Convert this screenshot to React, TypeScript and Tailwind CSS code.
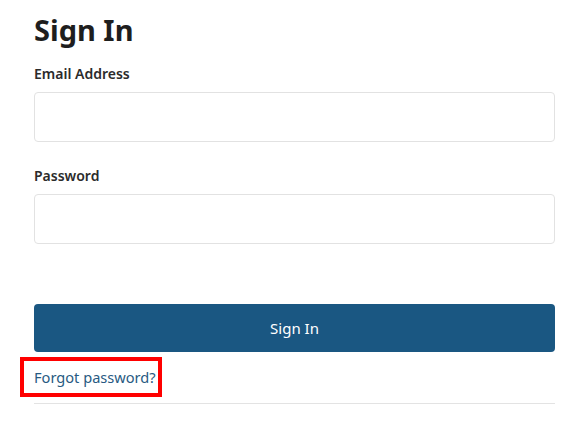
export default function App() {
  return (
    <div className="w-[581px] h-[427px] bg-white" style={{ fontFamily: '"Noto Sans", "Open Sans", sans-serif' }}>
      <div className="ml-[34px] w-[521px] pt-[11px]">
        <h1 className="text-[29px] leading-[38px] font-bold text-[#1e1e1e]">Sign In</h1>
        <label className="block mt-[15px] text-[14px] leading-[20px] font-semibold text-[#2b2b2b]">Email Address</label>
        <div className="mt-[8px] h-[50px] rounded-[4px] border border-[#e2e2e2] bg-white" />
        <label className="block mt-[24px] text-[14px] leading-[20px] font-semibold text-[#2b2b2b]">Password</label>
        <div className="mt-[8px] h-[50px] rounded-[4px] border border-[#e2e2e2] bg-white" />
        <button className="mt-[60px] w-full h-[48px] rounded-[4px] bg-[#1a5782] text-white text-[15px] flex items-center justify-center">
          Sign In
        </button>
        <div className="mt-[5px] ml-[-14px] inline-block border-[4px] border-[#ff0000] pl-[10px] pr-[2px]">
          <span className="block text-[14.6px] leading-[32px] text-[#285a82]">Forgot password?</span>
        </div>
        <div className="mt-[6px] border-t border-[#e3e3e3]" />
      </div>
    </div>
  );
}
